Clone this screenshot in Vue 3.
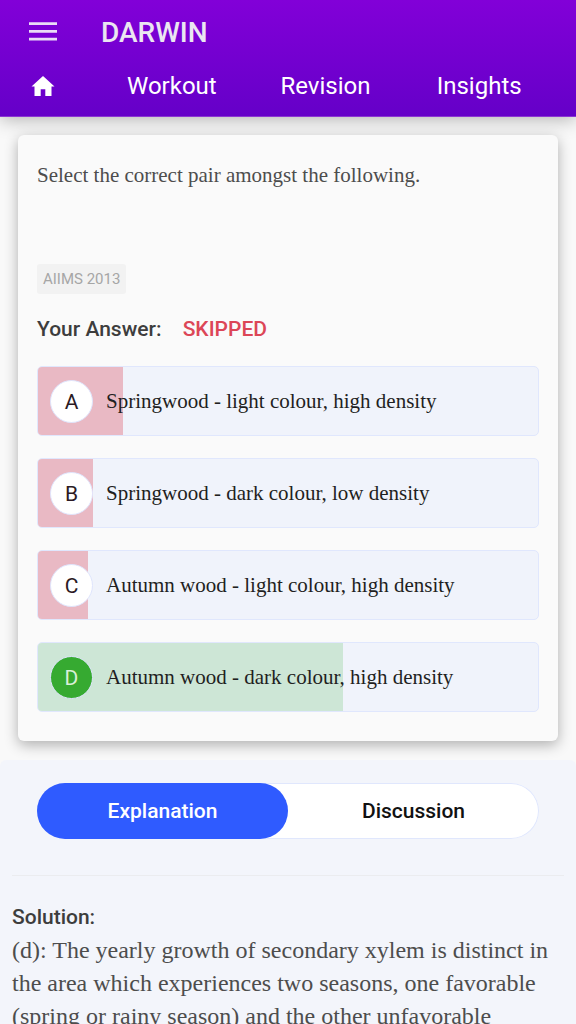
<script setup>
import { ref } from 'vue'

const links = ['Workout', 'Revision', 'Insights']
const options = [
  { letter: 'A', text: 'Springwood - light colour, high density', share: 17 },
  { letter: 'B', text: 'Springwood - dark colour, low density', share: 11 },
  { letter: 'C', text: 'Autumn wood - light colour, high density', share: 10 },
  { letter: 'D', text: 'Autumn wood - dark colour, high density', share: 61, correct: true },
]
const tabs = ['Explanation', 'Discussion']
const active = ref('Explanation')
</script>

<template>
  <div class="page">
    <header class="header">
      <div class="brand-row">
        <button class="menu" type="button" aria-label="Menu">
          <svg width="28" height="20" viewBox="0 0 28 20" aria-hidden="true">
            <path d="M0 1.700h28M0 9.400h28M0 17.100h28" stroke="#eadcf6" stroke-width="2.700" />
          </svg>
        </button>
        <span class="brand">DARWIN</span>
      </div>
      <nav class="nav">
        <a class="home" href="#" aria-label="Home">
          <svg width="24" height="20" viewBox="0 0 24 20" aria-hidden="true">
            <path d="M12 0L0.500 10.400h3V20h6.200v-6.800h4.600V20h6.200v-9.600h3z" fill="#fff" />
          </svg>
        </a>
        <a v-for="link in links" :key="link" class="link" href="#">{{ link }}</a>
      </nav>
    </header>

    <main>
      <section class="card">
        <p class="question">Select the correct pair amongst the following.</p>
        <span class="source">AIIMS 2013</span>
        <p class="answer">Your Answer: <span class="skipped">SKIPPED</span></p>
        <ul class="options">
          <li v-for="o in options" :key="o.letter" class="option" :class="{ correct: o.correct }">
            <span class="fill" :style="{ width: o.share + '%' }"></span>
            <span class="letter">{{ o.letter }}</span>
            <span class="option-text">{{ o.text }}</span>
          </li>
        </ul>
      </section>

      <section class="details">
        <div class="tabs" role="tablist">
          <button
            v-for="tab in tabs"
            :key="tab"
            class="tab"
            :class="{ active: active === tab }"
            type="button"
            role="tab"
            :aria-selected="active === tab"
            @click="active = tab"
          >{{ tab }}</button>
        </div>
        <hr class="rule" />
        <h2 class="solution-title">Solution:</h2>
        <p class="solution">(d): The yearly growth of secondary xylem is distinct in the area which experiences two seasons, one favorable (spring or rainy season) and the other unfavorable</p>
      </section>
    </main>
  </div>
</template>

<style>
body {
  margin: 0;
  background: #f9f9f9;
}
</style>

<style scoped>
.page {
  height: 100vh;
  overflow: hidden;
  font-family: Roboto, sans-serif;
  color: #3d3d3d;
}
.header {
  position: relative;
  padding: 12px 20px 0 0;
  background: linear-gradient(#8200d8, #6500c8);
  border-bottom: 1px solid #8b35d2;
  box-shadow: 0 2px 18px rgba(0, 0, 0, 0.3);
}
.brand-row {
  display: flex;
  align-items: center;
  height: 40px;
}
.menu {
  display: flex;
  width: 101px;
  padding: 0 0 0 29px;
  border: 0;
  background: none;
}
.brand {
  font-size: 28px;
  font-weight: 500;
  color: #ebe6f1;
}
.nav {
  display: grid;
  grid-template-columns: 95px repeat(3, 1fr);
  align-items: center;
  height: 60px;
  padding-top: 4px;
}
.home {
  display: flex;
  padding-left: 31px;
}
.link {
  text-align: center;
  font-size: 24px;
  line-height: 44px;
  color: #fff;
  text-decoration: none;
}
.card {
  position: relative;
  margin: 18px 18px 0;
  padding: 24px 19px 29px;
  background: #fafafa;
  border-radius: 6px;
  box-shadow: 0 4px 14px rgba(0, 0, 0, 0.3);
}
.question,
.option-text {
  font-family: "Liberation Serif", serif;
  font-size: 21px;
  line-height: 32px;
}
.question {
  margin: 0 0 73px;
  color: #4d4d4d;
}
.source {
  display: block;
  width: fit-content;
  padding: 0 6px;
  border-radius: 3px;
  background: #f2f2f2;
  color: #a6a6a6;
  font-size: 15px;
  line-height: 30px;
}
.answer {
  margin: 20px 0 22px;
  font-size: 21px;
  line-height: 30px;
  font-weight: 500;
}
.skipped {
  margin-left: 16px;
  color: #dc4657;
}
.options {
  display: grid;
  gap: 22px;
  margin: 0;
  padding: 0;
  list-style: none;
}
.option {
  position: relative;
  display: flex;
  align-items: center;
  gap: 13px;
  box-sizing: border-box;
  min-height: 70px;
  padding: 0 12px;
  overflow: hidden;
  border: 1px solid #e0e7fd;
  border-radius: 5px;
  background: #f0f3fb;
}
.fill {
  position: absolute;
  inset: 0 auto 0 0;
  background: #e9b9c4;
}
.correct .fill {
  background: #cde6d6;
}
.letter {
  position: relative;
  box-sizing: border-box;
  width: 43px;
  height: 43px;
  border: 1px solid #dfe5fd;
  border-radius: 50%;
  background: #fff;
  color: #2b1a24;
  font-size: 21px;
  line-height: 43px;
  text-align: center;
}
.correct .letter {
  background: #36aa31;
  color: #d9f0d8;
}
.option-text {
  position: relative;
  color: #1f1f22;
}
.details {
  margin-top: 19px;
  padding: 23px 12px 0;
  border-radius: 6px 6px 0 0;
  background: #f3f5fb;
}
.tabs {
  display: grid;
  grid-template-columns: 1fr 1fr;
  margin: 0 25px;
  border-radius: 28px;
  background: #fff;
  box-shadow: inset 0 0 0 1px #e0e7fd;
}
.tab {
  height: 56px;
  padding: 0;
  border: 0;
  border-radius: 28px;
  background: none;
  font-family: inherit;
  font-size: 21px;
  font-weight: 500;
  color: #111;
}
.tab.active {
  background: #2f5bff;
  color: #fff;
}
.rule {
  margin: 36px 0 25px;
  border: 0;
  border-top: 1px solid #ebecef;
}
.solution-title {
  margin: 0;
  font-size: 21px;
  line-height: 33px;
  font-weight: 500;
}
.solution {
  margin: 0;
  font-family: "Liberation Serif", serif;
  font-size: 24px;
  line-height: 33px;
  color: #4d4d4d;
}
</style>
